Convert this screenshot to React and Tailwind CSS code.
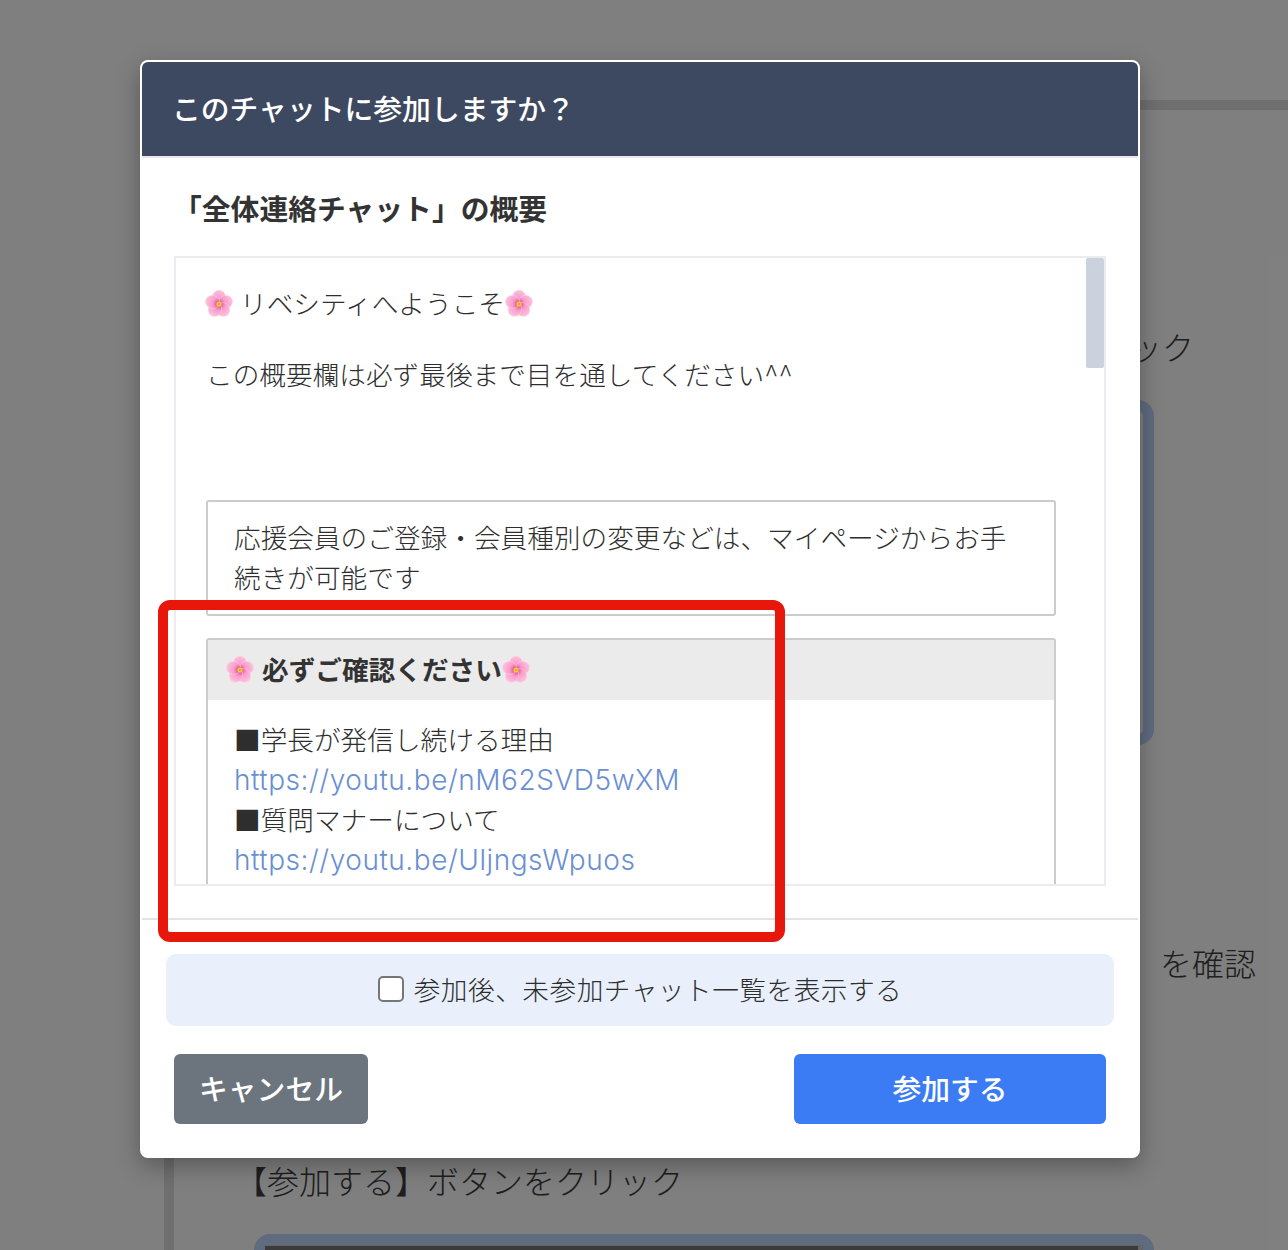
import React from "react";

const jp = "font-['Noto_Sans_CJK_JP','Liberation_Sans',sans-serif]";

function Blossom({ className = "" }) {
  const petals = [0, 72, 144, 216, 288];
  return (
    <svg viewBox="0 0 28 28" className={`inline-block w-[28px] h-[28px] shrink-0 ${className}`}>
      <defs>
        <radialGradient id="petal" gradientUnits="userSpaceOnUse" cx="14" cy="14" r="14">
          <stop offset="0.18" stopColor="#e85a9e" />
          <stop offset="0.45" stopColor="#f89ccb" />
          <stop offset="1" stopColor="#fdc4df" />
        </radialGradient>
      </defs>
      {petals.map((a) => (
        <ellipse
          key={a}
          cx="14"
          cy="7.2"
          rx="6.6"
          ry="7.2"
          fill="url(#petal)"
          stroke="#fddcec"
          strokeWidth="0.4"
          transform={`rotate(${a} 14 14)`}
        />
      ))}
      <circle cx="14" cy="14" r="2.6" fill="#f5c63c" />
      <circle cx="14" cy="14" r="1" fill="#e89a20" />
    </svg>
  );
}

function Background() {
  return (
    <div className="h-[1250px] overflow-hidden bg-white text-[#3c3c3c] font-light">
      <div className="h-[100px]" />
      <div className="h-[10px] bg-[#dedede] ml-[164px]" />
      <div className="ml-[164px] border-l-[10px] border-[#dedede] pl-[80px] pr-[134px] h-[1140px]">
        <div className="pt-[214px] w-[940px] text-right text-[32px] leading-[44px]">チャットをクリック</div>
        <div className="mt-[32px] h-[345px] w-[900px] rounded-[16px] border-[11px] border-[#bed6ff] bg-white" />
        <div className="mt-[195px] -ml-[6px] w-[1008px] text-right text-[32px] leading-[44px]">を確認</div>
        <div className="mt-[174px] -ml-[19px] text-[32px] leading-[44px]">【参加する】ボタンをクリック</div>
        <div className="mt-[32px] h-[300px] w-[900px] rounded-[16px] border-[11px] border-[#bed6ff]">
          <div className="h-full bg-[#777] border-t border-r-[5px] border-[#ccc]" />
        </div>
      </div>
    </div>
  );
}

export default function App() {
  return (
    <div className={`relative h-[1250px] overflow-hidden ${jp}`}>
      <Background />
      <div className="absolute inset-0 bg-black/50 pl-[140px] pt-[60px]">
        <div className="w-[1000px] h-[1098px] bg-white rounded-[8px] border-2 border-white shadow-[0_8px_24px_rgba(0,0,0,0.3)] flex flex-col">
          <div className="h-[96px] shrink-0 bg-[#3d4960] border-b-2 border-[#e9e9ef] rounded-t-[6px] pl-[30px] pb-[2px] flex items-center text-white text-[28.8px] font-medium">
            このチャットに参加しますか？
          </div>
          <div className="h-[762px] shrink-0 border-b-2 border-[#e2e2e8] px-[32px]">
            <h2 className="pt-[28px] -ml-[1px] text-[28.8px] leading-[44px] font-bold text-[#333]">「全体連絡チャット」の概要</h2>
            <div className="relative mt-[26px] h-[630px] border-2 border-[#ebebf0] overflow-hidden text-[26.67px] leading-[40px] text-[#2e2e2e] font-light">
              <div className="pt-[25px] pl-[29px] flex items-center">
                <Blossom className="mt-[2px]" />
                <span className="ml-[7px]">リベシティへようこそ</span>
                <Blossom className="mt-[2px]" />
              </div>
              <p className="mt-[31px] pl-[30px]">この概要欄は必ず最後まで目を通してください^^</p>
              <div className="mt-[106px] ml-[30px] w-[850px] border-2 border-[#ccc] rounded-[3px] px-[26px] pt-[15px] pb-[17px]">
                応援会員のご登録・会員種別の変更などは、マイページからお手続きが可能です
              </div>
              <div className="mt-[22px] ml-[30px] w-[850px] h-[400px] border-2 border-[#ccc] rounded-[3px]">
                <div className="h-[60px] bg-[#ebebeb] pl-[18px] flex items-center font-bold text-[#333]">
                  <Blossom />
                  <span className="ml-[8px] -mt-[2px]">必ずご確認ください</span>
                  <Blossom />
                </div>
                <div className="px-[26px] pt-[19px]">
                  <p>■学長が発信し続ける理由</p>
                  <a className="block pt-[1px] -mb-[1px] text-[#6a8fd2] text-[28px] tracking-[0.55px] font-['Inter',sans-serif]">https://youtu.be/nM62SVD5wXM</a>
                  <p>■質問マナーについて</p>
                  <a className="block pt-[1px] -mb-[1px] text-[#6a8fd2] text-[28px] tracking-[0.55px] font-['Inter',sans-serif]">https://youtu.be/UljngsWpuos</a>
                </div>
              </div>
              <div className="absolute top-0 right-0 w-[18px] h-[110px] bg-[#cbd2dd] rounded-[2px]" />
            </div>
          </div>
          <div className="px-[24px] pt-[34px]">
            <label className="h-[72px] pb-[2px] rounded-[10px] bg-[#e9f0fc] flex items-center justify-center gap-[10px] text-[26.67px] tracking-[0.5px] text-[#2e2e2e] font-light">
              <span className="w-[26px] h-[26px] bg-white border-2 border-[#767676] rounded-[5px]" />
              参加後、未参加チャット一覧を表示する
            </label>
          </div>
          <div className="px-[32px] pt-[28px] flex justify-between">
            <button className="w-[194px] h-[70px] pb-[2px] bg-[#6c757d] rounded-[6px] text-white text-[28.8px] font-medium">キャンセル</button>
            <button className="w-[312px] h-[70px] pb-[2px] bg-[#3b7cf5] rounded-[6px] text-white text-[28.8px] font-medium">参加する</button>
          </div>
        </div>
      </div>
      <div className="absolute left-[158px] top-[600px] w-[627px] h-[342px] border-[10px] border-[#e8170c] rounded-[12px] pointer-events-none" />
    </div>
  );
}
